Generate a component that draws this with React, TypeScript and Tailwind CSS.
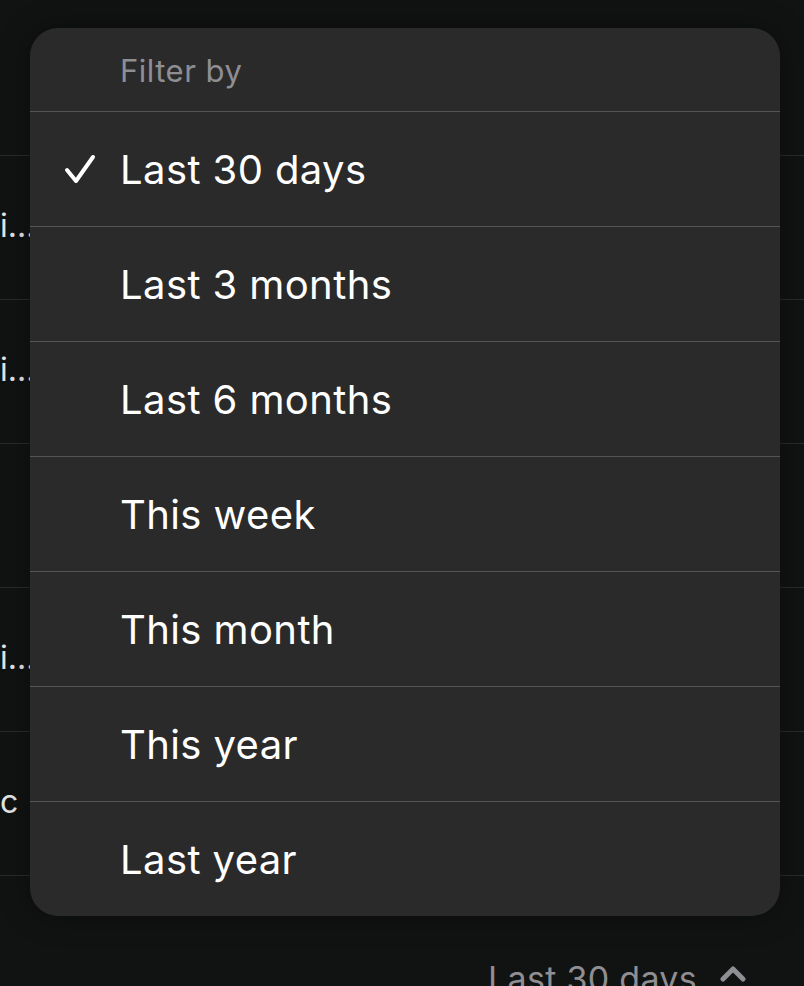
import React from "react";

const items = [
  "Last 30 days",
  "Last 3 months",
  "Last 6 months",
  "This week",
  "This month",
  "This year",
  "Last year",
];

export default function App() {
  return (
    <div
      className="relative w-[804px] h-[986px] overflow-hidden bg-[#111212] text-white"
      style={{ fontFamily: "Inter, 'Noto Sans', sans-serif" }}
    >
      {/* background table */}
      <div className="flex flex-col pt-[155px]">
        {["i...", "i...", "", "i...", "c"].map((t, i) => (
          <div
            key={i}
            className="h-[144px] border-t border-[#2a2a2a] flex items-center text-[32px] text-[#e5e5e5] pl-0"
          >
            <span className="-mt-[4px]">{t}</span>
          </div>
        ))}
        <div className="border-t border-[#2a2a2a]" />
      </div>

      {/* bottom button */}
      <div className="absolute left-[488px] top-[962px] flex items-start gap-[22px] text-[#8e8e93] text-[34px] tracking-[0.3px]">
        <span className="leading-none">Last 30 days</span>
        <svg width="28" height="18" viewBox="0 0 28 18" className="mt-[2px]">
          <path d="M4 15 L14 5 L24 15" stroke="#8e8e93" strokeWidth="5" fill="none" strokeLinecap="round" strokeLinejoin="round" />
        </svg>
      </div>

      {/* menu */}
      <div className="absolute left-[30px] top-[28px] w-[750px] rounded-[28px] bg-[#2a2a2a] overflow-hidden shadow-[0_0_30px_rgba(0,0,0,0.35)]">
        <div className="h-[83px] flex items-center pl-[90px] text-[31px] tracking-[0.5px] text-[#8e8e93]">
          <span className="mt-[4px]">Filter by</span>
        </div>
        {items.map((label, i) => (
          <div
            key={label}
            className="h-[115px] border-t border-[#555557] flex items-center relative"
          >
            {i === 0 && (
              <svg
                width="32"
                height="30"
                viewBox="0 0 32 30"
                className="absolute left-[34px] top-[42px]"
              >
                <path
                  d="M3 16 L12 27 L29 3"
                  stroke="white"
                  strokeWidth="4"
                  fill="none"
                  strokeLinecap="round"
                  strokeLinejoin="round"
                />
              </svg>
            )}
            <span className="pl-[90px] text-[40px] tracking-[0.4px] text-white mt-[2px]">{label}</span>
          </div>
        ))}
      </div>
    </div>
  );
}
